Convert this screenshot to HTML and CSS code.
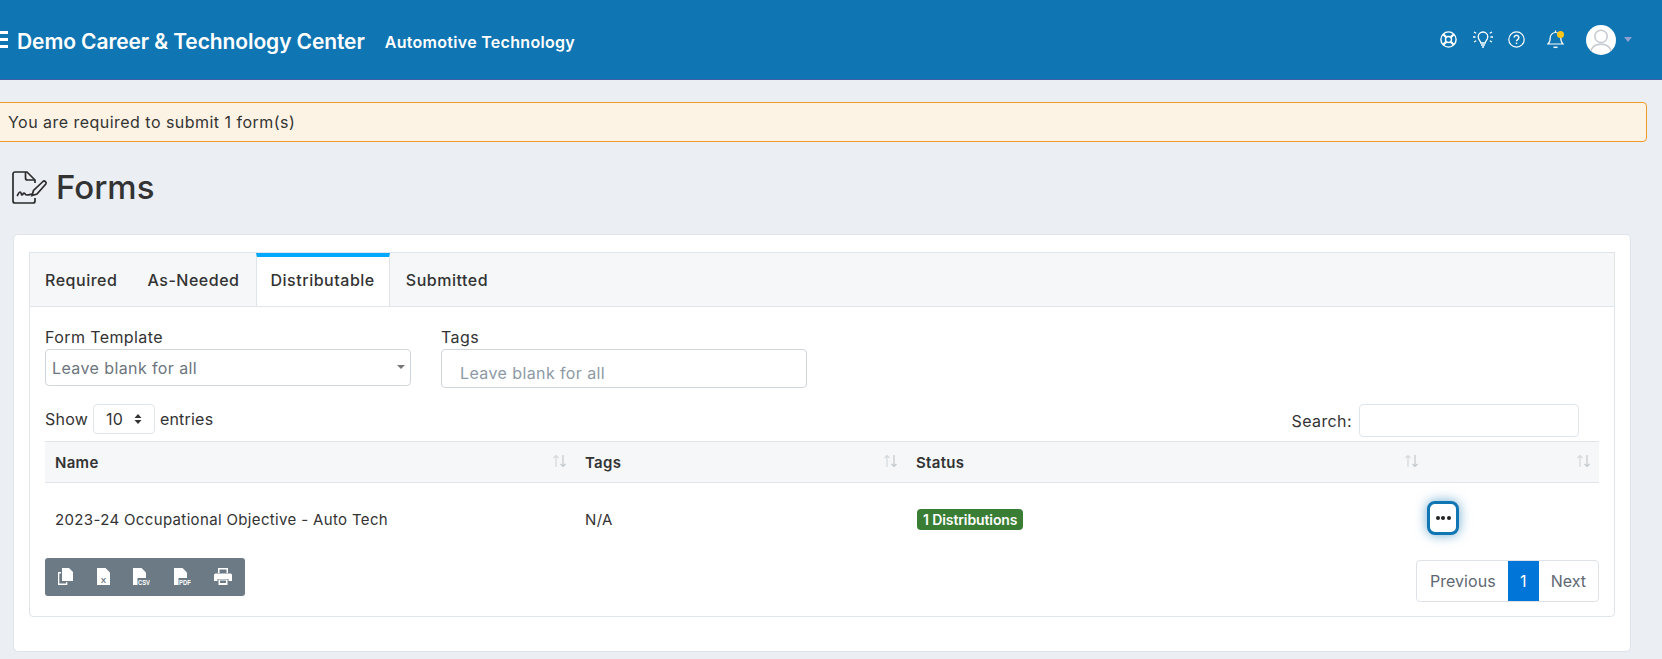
FILE: index.html
```html
<!DOCTYPE html>
<html lang="en">
<head>
    <meta charset="UTF-8">
    <meta name="viewport" content="width=device-width, initial-scale=1.0">
    <title>Forms</title>
    <link rel="stylesheet" href="styles.css">
</head>
<body>
    <header class="topbar">
        <div class="burger"><span></span><span></span><span></span></div>
        <div class="school">Demo Career &amp; Technology Center</div>
        <div class="program">Automotive Technology</div>
        <div class="top-icons">
            <svg class="lifebuoy" width="17" height="17" viewBox="0 0 17 17" fill="none" stroke="#fff" stroke-width="1.4"><circle cx="8.500" cy="8.500" r="7.600"/><circle cx="8.500" cy="8.500" r="3"/><path d="M3.200 3.200l3.200 3.200M13.800 3.200l-3.200 3.200M3.200 13.800l3.200-3.200M13.800 13.800l-3.200-3.200" stroke-width="2.200"/></svg>
            <svg class="bulb" width="20" height="17" viewBox="0 0 20 17" fill="none" stroke="#fff" stroke-width="1.300"><path d="M7.800 12c0-2-2.600-3-2.600-6.200a4.800 4.800 0 0 1 9.600 0c0 3.200-2.600 4.200-2.600 6.200z"/><path d="M8 14h4M9 16h2M0 6h2.600M17.400 6H20M1 1l2.200 1.300M19 1l-2.200 1.300M1 11l2.200-1.300M19 11l-2.200-1.300"/></svg>
            <svg class="help" width="17" height="17" viewBox="0 0 17 17" fill="none" stroke="#fff" stroke-width="1.200"><circle cx="8.500" cy="8.500" r="7.700"/><path d="M6.200 6.600a2.300 2.300 0 1 1 3.500 2c-.8.5-1.200.9-1.200 1.700" stroke-width="1.500"/><path d="M8.500 11.600v1.500" stroke-width="1.500"/></svg>
            <span class="bell-wrap">
                <svg width="17" height="19" viewBox="0 0 17 19" fill="none" stroke="#fff" stroke-width="1.200"><path d="M8.500 .5v1.500M1 14c1.800-1.500 2.200-3 2.200-6.200a5.300 5.300 0 0 1 10.600 0c0 3.200.4 4.700 2.200 6.200z"/><path d="M6.500 17.300h4" stroke-width="1.500"/></svg>
                <i class="bell-dot"></i>
            </span>
            <span class="avatar">
                <svg width="30" height="30" viewBox="0 0 29 29"><circle cx="14.500" cy="14.500" r="14.500" fill="#fff"/><circle cx="14.500" cy="11" r="6" fill="none" stroke="#c6ccd2" stroke-width="1.500"/><path d="M4.500 25c2-5 6-6.500 10-6.500s8 1.500 10 6.500" fill="none" stroke="#c6ccd2" stroke-width="1.500"/></svg>
            </span>
            <i class="caret"></i>
        </div>
    </header>

    <div class="notice">You are required to submit 1 form(s)</div>

    <div class="page-title">
        <svg width="36" height="33" viewBox="0 0 36 33" fill="none" stroke="#2b2b2b" stroke-width="1.700"><path d="M23 12V9l-8-8H3a2 2 0 0 0-2 2v27a2 2 0 0 0 2 2h18a2 2 0 0 0 2-2v-3"/><path d="M13.500 1v6a2 2 0 0 0 2 2H23"/><path d="M5 25c1-1 1.500-4 3-4s1 3 2 3 1-2 2-2 1 2 3 2 3-.5 5-1"/><path d="M20 24.500l1.500-5 9.500-9c1.500-1.400 4 .8 2.800 2.500L25 23z"/></svg>
        <h1>Forms</h1>
    </div>

    <section class="card">
        <ul class="tabs">
            <li class="tab">Required</li>
            <li class="tab">As-Needed</li>
            <li class="tab active">Distributable</li>
            <li class="tab">Submitted</li>
        </ul>
        <div class="tab-body">
            <div class="filters">
                <div class="field">
                    <label>Form Template</label>
                    <div class="fake-select">Leave blank for all<i class="mini-caret"></i></div>
                </div>
                <div class="field">
                    <label>Tags</label>
                    <div class="fake-tags">Leave blank for all</div>
                </div>
            </div>

            <div class="table-top">
                <div class="show">
                    Show
                    <span class="length">10
                        <svg width="8" height="12" viewBox="0 0 8 12" fill="#333"><path d="M4 1l3.500 4h-7zM4 11L.5 7h7z"/></svg>
                    </span>
                    entries
                </div>
                <div class="search">Search: <span class="search-box"></span></div>
            </div>

            <table class="grid">
                <thead>
                    <tr>
                        <th class="col-name">Name<svg class="sort" width="15" height="14" viewBox="0 0 15 14" fill="none" stroke="#d5d9dd" stroke-width="1.200"><path d="M4 13V1.500M1.500 4L4 1.500 6.500 4"/><path d="M11 1v11.500M8.500 10l2.500 2.500 2.500-2.500" stroke="#c3c8cc"/></svg></th>
                        <th class="col-tags">Tags<svg class="sort" width="15" height="14" viewBox="0 0 15 14" fill="none" stroke="#d5d9dd" stroke-width="1.200"><path d="M4 13V1.500M1.500 4L4 1.500 6.500 4"/><path d="M11 1v11.500M8.500 10l2.500 2.500 2.500-2.500" stroke="#c3c8cc"/></svg></th>
                        <th class="col-status">Status<svg class="sort" width="15" height="14" viewBox="0 0 15 14" fill="none" stroke="#d5d9dd" stroke-width="1.200"><path d="M4 13V1.500M1.500 4L4 1.500 6.500 4"/><path d="M11 1v11.500M8.500 10l2.500 2.500 2.500-2.500" stroke="#c3c8cc"/></svg></th>
                        <th class="col-actions"><svg class="sort" width="15" height="14" viewBox="0 0 15 14" fill="none" stroke="#d5d9dd" stroke-width="1.200"><path d="M4 13V1.500M1.500 4L4 1.500 6.500 4"/><path d="M11 1v11.500M8.500 10l2.500 2.500 2.500-2.500" stroke="#c3c8cc"/></svg></th>
                    </tr>
                </thead>
                <tbody>
                    <tr>
                        <td>2023-24 Occupational Objective - Auto Tech</td>
                        <td>N/A</td>
                        <td><span class="badge">1 Distributions</span></td>
                        <td class="cell-actions"><button class="more"><i></i><i></i><i></i></button></td>
                    </tr>
                </tbody>
            </table>

            <div class="table-bottom">
                <div class="export">
                    <svg width="16" height="17" viewBox="0 0 16 17" fill="#fff"><path d="M5 0h7l4 4v9H5z"/><path d="M1 4h3v1.500H2.300v10H9V14h1.300v3H1z"/></svg>
                    <svg width="13" height="17" viewBox="0 0 13 17"><path fill="#fff" d="M0 0h8.500L13 4.500V17H0z"/><text class="ico-label ico-x" x="6.500" y="14.500" text-anchor="middle" fill="#6c7a85">X</text></svg>
                    <svg width="17" height="17" viewBox="0 0 17 17"><path fill="#fff" d="M0 0h8.500L13 4.500V17H0z"/><rect x="4.500" y="10" width="12.500" height="7" fill="#6c7a85"/><text class="ico-label" x="5" y="16.500" textLength="12" lengthAdjust="spacingAndGlyphs" fill="#fff">CSV</text></svg>
                    <svg width="17" height="17" viewBox="0 0 17 17"><path fill="#fff" d="M0 0h8.500L13 4.500V17H0z"/><rect x="4.500" y="10" width="12.500" height="7" fill="#6c7a85"/><text class="ico-label" x="5" y="16.500" textLength="12" lengthAdjust="spacingAndGlyphs" fill="#fff">PDF</text></svg>
                    <svg width="18" height="17" viewBox="0 0 18 17" fill="#fff"><path d="M4 0h10v5h-1.500V1.500h-7V5H4zM1.500 5.500h15A1.500 1.500 0 0 1 18 7v6h-3.500v-2h-11v2H0V7a1.500 1.500 0 0 1 1.500-1.500zM4.500 11.500h9V17h-9z"/><path fill="#6c7a85" d="M6 12.500h6V15H6z"/></svg>
                </div>
                <div class="pager">
                    <span class="page page-prev">Previous</span>
                    <span class="page current">1</span>
                    <span class="page">Next</span>
                </div>
            </div>
        </div>
    </section>
</body>
</html>
```

FILE: styles.css
```css
* {
    box-sizing: border-box;
}

html, body {
    height: 659px;
    overflow: hidden;
}

body {
    margin: 0;
    background-color: #ebeef3;
    color: #333;
    font-family: 'Inter', 'Open Sans', sans-serif;
    font-size: 16px;
    letter-spacing: 0.4px;
}

.topbar {
    display: flex;
    align-items: center;
    height: 80px;
    background-color: #0f75b3;
    border-bottom: 1px solid #3f5ea8;
    color: #fff;
    font-weight: 600;
}

.burger {
    display: flex;
    flex-direction: column;
    gap: 4px;
    width: 8px;
    margin-right: 9px;
}

.burger span {
    display: block;
    height: 3px;
    background-color: #fff;
}

.school {
    padding-top: 4px;
    font-size: 21px;
    letter-spacing: -0.1px;
    margin-right: 20px;
}

.program {
    padding-top: 4px;
    font-size: 16px;
    letter-spacing: 0.3px;
}

.top-icons {
    display: flex;
    align-items: center;
    margin-left: auto;
    padding-right: 30px;
}

.lifebuoy {
    margin-right: 16px;
}

.bulb {
    margin-right: 15px;
}

.help {
    margin-right: 22px;
}

.bell-wrap {
    position: relative;
    display: flex;
    margin-right: 22px;
}

.bell-dot {
    position: absolute;
    top: 1px;
    right: 0;
    width: 7px;
    height: 7px;
    border-radius: 50%;
    background-color: #ffc61a;
}

.avatar {
    display: flex;
    margin-right: 8px;
}

.caret {
    width: 0;
    height: 0;
    border-left: 4px solid transparent;
    border-right: 4px solid transparent;
    border-top: 5px solid #8f9fd0;
}

.notice {
    width: 1657px;
    height: 40px;
    margin: 22px 0 0 -10px;
    padding: 0 0 0 17px;
    line-height: 38px;
    letter-spacing: 0.47px;
    background-color: #fdf3e5;
    border: 1px solid #f09a28;
    border-radius: 4px;
}

.page-title {
    display: flex;
    align-items: center;
    gap: 8px;
    height: 92px;
    padding: 0 0 2px 12px;
}

.page-title h1 {
    margin: 0;
    font-size: 33px;
    font-weight: 500;
    letter-spacing: 0;
}

.card {
    width: 1618px;
    height: 418px;
    margin-left: 13px;
    padding: 17px 15px 0;
    background-color: #fff;
    border: 1px solid #dfe4ea;
    border-radius: 5px;
}

.tabs {
    display: flex;
    height: 54px;
    margin: 0;
    padding: 0;
    list-style: none;
    background-color: #f5f7f9;
    border: 1px solid #dfe6eb;
    border-bottom: none;
}

.tab {
    padding: 17px 15px 0;
    line-height: 20px;
    font-weight: 500;
    letter-spacing: 0.52px;
}

.tab.active {
    margin-left: 1px;
    background-color: #fff;
    border-top: 4px solid #00a8ff;
    border-left: 1px solid #dfe6eb;
    border-right: 1px solid #dfe6eb;
    padding-top: 13px;
    padding-left: 14px;
    padding-right: 14px;
}

.tab.active + .tab {
    padding-left: 16px;
}

.tab-body {
    height: 311px;
    padding: 18px 15px 0 15px;
    border: 1px solid #dfe6eb;
    border-radius: 0 0 4px 4px;
}

.filters {
    display: flex;
    gap: 30px;
    height: 79px;
}

.field {
    width: 366px;
}

.field label {
    display: block;
    height: 24px;
    line-height: 24px;
}

.fake-select {
    position: relative;
    height: 37px;
    padding-left: 6px;
    line-height: 37px;
    color: #6c757d;
    border: 1px solid #ced7de;
    border-radius: 4px;
}

.mini-caret {
    position: absolute;
    top: 15px;
    right: 5px;
    border-left: 4px solid transparent;
    border-right: 4px solid transparent;
    border-top: 4px solid #777;
}

.fake-tags {
    height: 39px;
    padding: 12px 0 0 18px;
    line-height: 22px;
    color: #8d9aa5;
    border: 1px solid #ced7de;
    border-radius: 4px;
}

.table-top {
    display: flex;
    justify-content: space-between;
    align-items: flex-start;
    height: 37px;
    padding-right: 20px;
}

.show {
    display: flex;
    align-items: center;
    gap: 5px;
    height: 30px;
    letter-spacing: 0.2px;
}

.length {
    display: flex;
    align-items: center;
    justify-content: space-between;
    width: 62px;
    height: 30px;
    padding: 0 12px;
    border: 1px solid #dfe6eb;
    border-radius: 4px;
}

.search {
    display: flex;
    align-items: center;
    gap: 7px;
}

.search-box {
    display: block;
    width: 220px;
    height: 33px;
    border: 1px solid #dfe6eb;
    border-radius: 4px;
}

.grid {
    width: 1554px;
    border-collapse: collapse;
    table-layout: fixed;
}

.grid th {
    position: relative;
    height: 41px;
    padding: 0 10px;
    text-align: left;
    font-size: 15px;
    font-weight: 600;
    letter-spacing: 0.3px;
    background-color: #f5f7f9;
    border-top: 1px solid #dfe6eb;
    border-bottom: 1px solid #dfe6eb;
}

.grid td {
    height: 75px;
    padding: 0 10px 2px;
    font-size: 15px;
    letter-spacing: 0.35px;
}

.grid td.cell-actions {
    padding: 0;
}

.col-name {
    width: 530px;
}

.col-tags {
    width: 331px;
}

.col-status {
    width: 521px;
}

.sort {
    position: absolute;
    top: 12px;
    right: 8px;
}

.badge {
    display: inline-block;
    margin-left: 1px;
    padding: 0 6px;
    height: 21px;
    line-height: 21px;
    color: #fff;
    font-size: 14px;
    font-weight: 600;
    letter-spacing: -0.1px;
    background-color: #3a7d34;
    border-radius: 4px;
}

.more {
    display: flex;
    align-items: center;
    justify-content: center;
    gap: 1.500px;
    width: 32px;
    height: 34px;
    margin-top: -4px;
    padding: 0;
    background-color: #fff;
    border: 3px solid #0f75b3;
    border-radius: 8px;
    box-shadow: 0 0 12px rgba(15, 117, 179, 0.6);
}

.more i {
    width: 4px;
    height: 4px;
    border-radius: 50%;
    background-color: #222;
}

.table-bottom {
    display: flex;
    justify-content: space-between;
    align-items: flex-start;
}

.export {
    display: flex;
    align-items: center;
    gap: 23.500px;
    width: 200px;
    height: 38px;
    padding-left: 12px;
    background-color: #6c7a85;
    border-radius: 3px;
}

.ico-label {
    font-family: 'Liberation Sans', sans-serif;
    font-size: 6.500px;
    font-weight: 700;
    letter-spacing: 0;
}

.ico-x {
    font-size: 8px;
}

.pager {
    display: flex;
    height: 42px;
    margin-top: 2px;
    border: 1px solid #dee2e6;
    border-radius: 4px;
    color: #5e6872;
    letter-spacing: 0;
}

.page {
    padding: 0 12px;
    line-height: 40px;
}

.page-prev {
    padding: 0 12px 0 13px;
    letter-spacing: 0.05px;
}

.page.current {
    width: 31px;
    padding: 0;
    text-align: center;
    color: #fff;
    background-color: #0275d8;
}
```
